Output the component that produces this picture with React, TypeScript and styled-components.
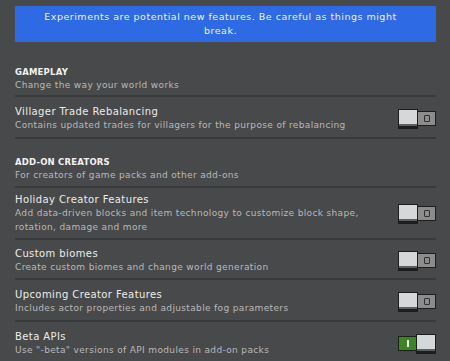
import React from 'react';
import styled, { createGlobalStyle } from 'styled-components';

const GlobalStyle = createGlobalStyle`
  html, body {
    margin: 0;
    padding: 0;
    background: #48494a;
  }
  body {
    font-family: "DejaVu Sans", "Liberation Sans", sans-serif;
  }
`;

const Page = styled.div`
  width: 450px;
  height: 361px;
  overflow: hidden;
  padding: 6px 14px 0 15px;
  box-sizing: border-box;
  background: #48494a;
`;

const Banner = styled.div`
  background: #2d6ae3;
  color: #eef2fb;
  font-size: 9.5px;
  line-height: 14px;
  letter-spacing: 0.5px;
  text-align: center;
  padding: 4px 30px 4px 20px;
  height: 36px;
  box-sizing: border-box;
`;

const Section = styled.div<{ $top: number; $bottom: number }>`
  padding: ${(p) => p.$top}px 0 ${(p) => p.$bottom}px;
  border-bottom: 2px solid #393a3b;
`;

const Heading = styled.div`
  color: #f2f2f2;
  font-weight: bold;
  font-size: 8.5px;
  line-height: 12px;
  letter-spacing: 0.2px;
`;

const Row = styled.div<{ $top: number; $bottom: number }>`
  display: flex;
  align-items: center;
  justify-content: space-between;
  padding: ${(p) => p.$top}px 0 ${(p) => p.$bottom}px;
  border-bottom: 2px solid #393a3b;
`;

const Text = styled.div`
  display: flex;
  flex-direction: column;
  max-width: 350px;
`;

const Title = styled.div`
  color: #ececec;
  font-size: 10px;
  line-height: 13px;
  letter-spacing: 0.4px;
`;

const Desc = styled.div`
  color: #b9b9ba;
  font-size: 9px;
  line-height: 14px;
  letter-spacing: 0.35px;
`;

const Toggle = styled.div`
  display: flex;
  align-items: center;
`;

const Knob = styled.div<{ $dim?: boolean }>`
  width: 18px;
  height: 16px;
  background: ${(p) => (p.$dim ? '#c3c3c5' : '#d6d7d9')};
  border: 1px solid #1d1d1e;
  border-bottom: 3px solid #1d1d1e;
  box-shadow: inset 0 -2px 0 #5e5e60;
  position: relative;
  z-index: 1;
`;

const Track = styled.div<{ $on: boolean }>`
  width: 17px;
  height: 13px;
  background: ${(p) => (p.$on ? '#3c8527' : '#8c8c8d')};
  border: 1px solid #1d1d1e;
  display: flex;
  align-items: center;
  justify-content: center;
  margin-left: ${(p) => (p.$on ? '0' : '-1px')};
  margin-right: ${(p) => (p.$on ? '-1px' : '0')};
`;

const OffMark = styled.div`
  width: 4px;
  height: 5px;
  border: 1.5px solid #2f2f30;
  border-radius: 1px;
`;

const OnMark = styled.div`
  width: 2px;
  height: 7px;
  background: #e8f2e2;
`;

type Feature = {
  title: string;
  desc: string;
  on?: boolean;
  dim?: boolean;
  top: number;
  bottom: number;
};

const Switch: React.FC<{ on?: boolean; dim?: boolean }> = ({ on, dim }) =>
  on ? (
    <Toggle>
      <Track $on>
        <OnMark />
      </Track>
      <Knob />
    </Toggle>
  ) : (
    <Toggle>
      <Knob $dim={dim} />
      <Track $on={false}>
        <OffMark />
      </Track>
    </Toggle>
  );

const FeatureRow: React.FC<{ f: Feature }> = ({ f }) => (
  <Row $top={f.top} $bottom={f.bottom}>
    <Text>
      <Title>{f.title}</Title>
      <Desc>{f.desc}</Desc>
    </Text>
    <Switch on={f.on} dim={f.dim} />
  </Row>
);

const gameplay: Feature[] = [
  {
    title: 'Villager Trade Rebalancing',
    desc: 'Contains updated trades for villagers for the purpose of rebalancing',
    top: 8,
    bottom: 5,
  },
];

const addons: Feature[] = [
  {
    title: 'Holiday Creator Features',
    desc: 'Add data-driven blocks and item technology to customize block shape, rotation, damage and more',
    top: 5,
    bottom: 4,
  },
  {
    title: 'Custom biomes',
    desc: 'Create custom biomes and change world generation',
    top: 7,
    bottom: 4,
  },
  {
    title: 'Upcoming Creator Features',
    desc: 'Includes actor properties and adjustable fog parameters',
    top: 8,
    bottom: 5,
  },
  {
    title: 'Beta APIs',
    desc: 'Use "-beta" versions of API modules in add-on packs',
    on: true,
    top: 8,
    bottom: 5,
  },
];

export default function App() {
  return (
    <>
      <GlobalStyle />
      <Page>
        <Banner>Experiments are potential new features. Be careful as things might break.</Banner>
        <Section $top={24} $bottom={3}>
          <Heading>GAMEPLAY</Heading>
          <Desc>Change the way your world works</Desc>
        </Section>
        {gameplay.map((f) => (
          <FeatureRow key={f.title} f={f} />
        ))}
        <Section $top={17} $bottom={4}>
          <Heading>ADD-ON CREATORS</Heading>
          <Desc>For creators of game packs and other add-ons</Desc>
        </Section>
        {addons.map((f) => (
          <FeatureRow key={f.title} f={f} />
        ))}
      </Page>
    </>
  );
}
